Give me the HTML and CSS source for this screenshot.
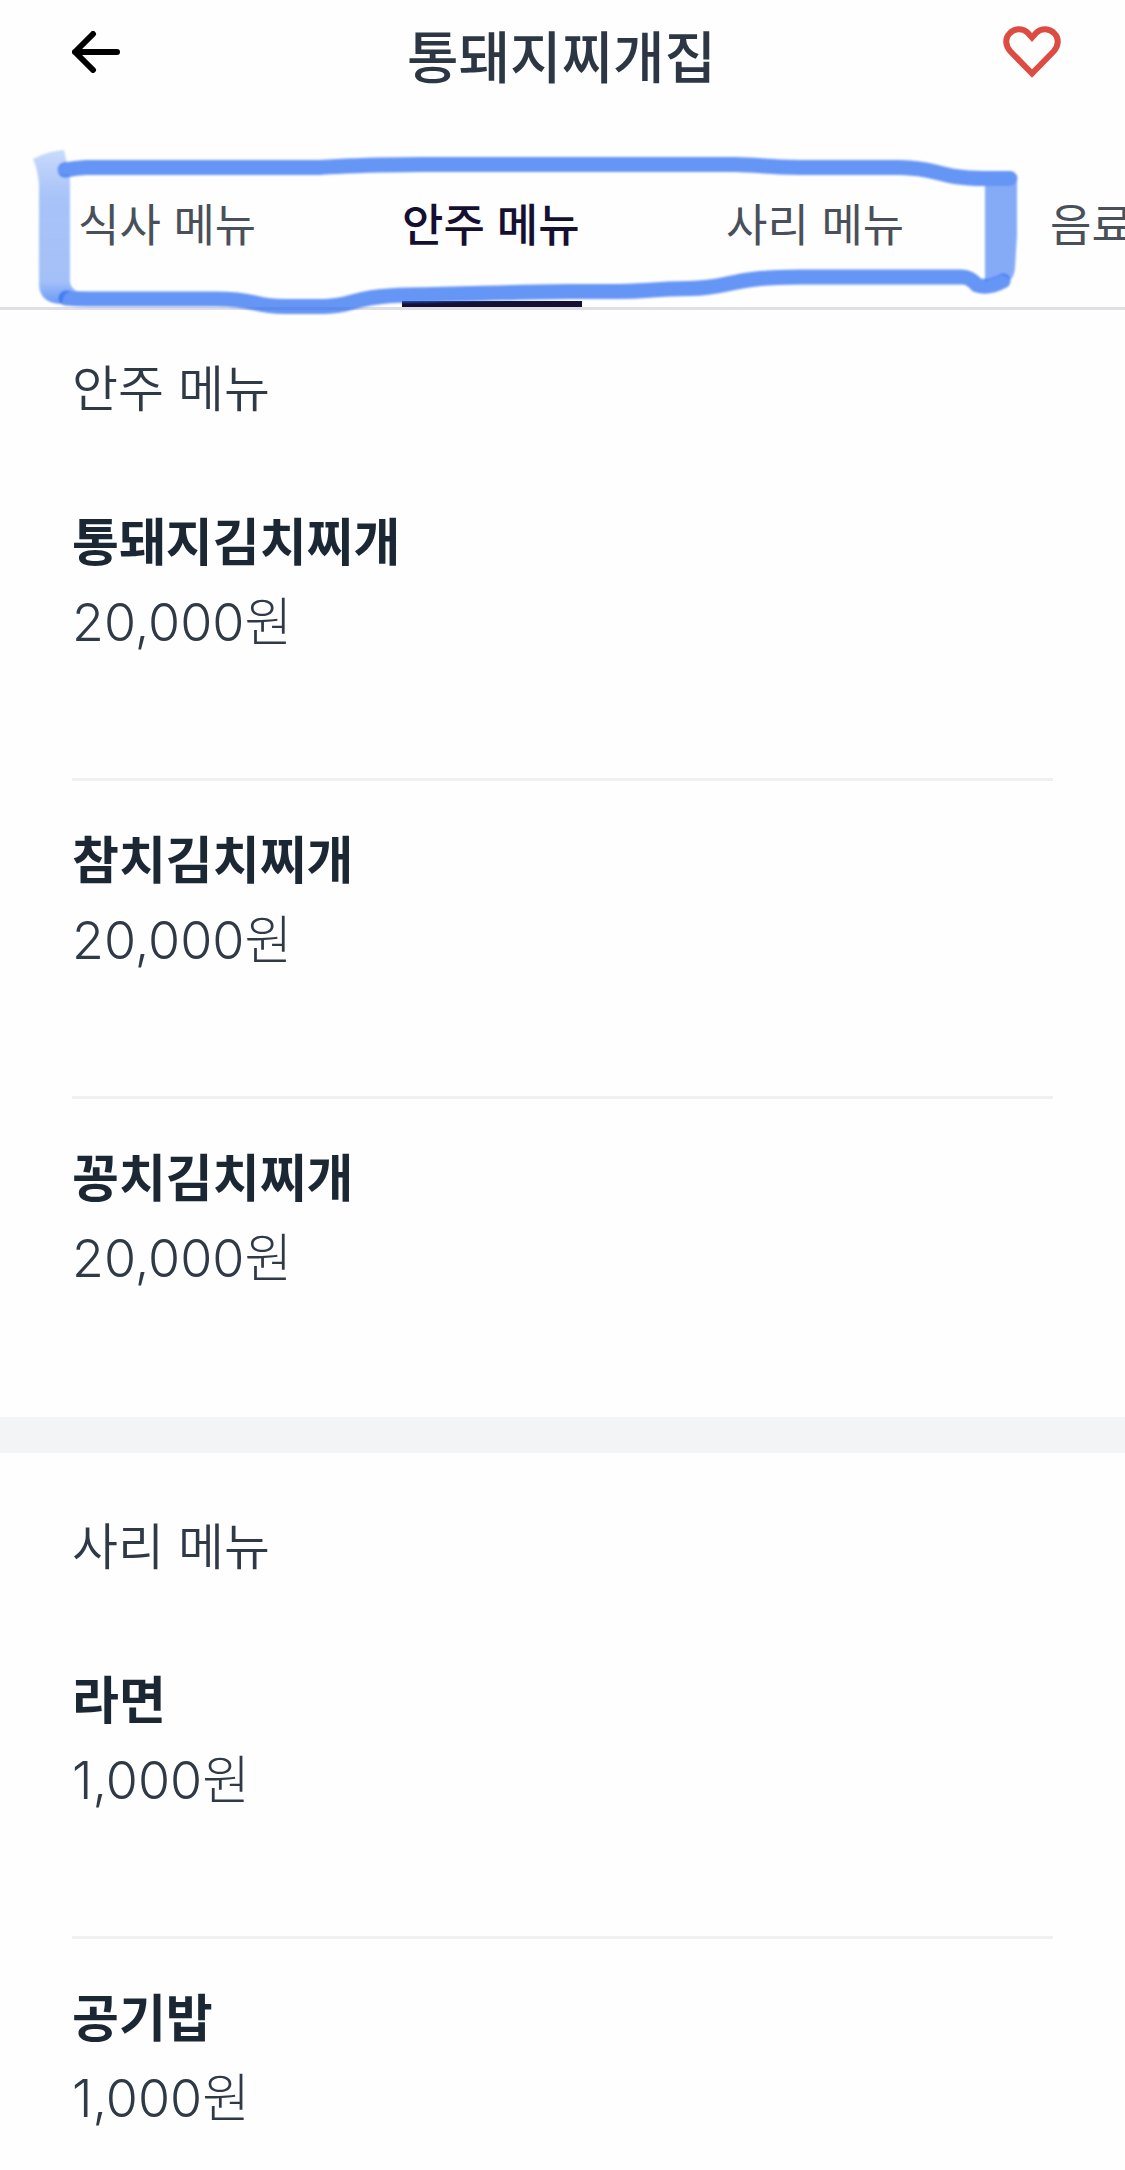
FILE: index.html
```html
<!DOCTYPE html>
<html lang="ko">
<head>
<meta charset="UTF-8" />
<meta name="viewport" content="width=device-width, initial-scale=1.0" />
<title>통돼지찌개집</title>
<link rel="stylesheet" href="styles.css">
</head>
<body>

<!-- 상단 바 -->
<header class="top-bar">
  <button class="icon-btn" type="button" aria-label="뒤로">
    <svg width="48" height="42" viewBox="0 0 48 42" fill="none" stroke="#000" stroke-width="6" stroke-linecap="round" stroke-linejoin="round">
      <path d="M45 21H3M21 3L3 21L21 39"/>
    </svg>
  </button>
  <h1>통돼지찌개집</h1>
  <button class="icon-btn" type="button" aria-label="찜하기">
    <svg width="58" height="52" viewBox="0 0 58 52" fill="none" stroke="#dc4c43" stroke-width="6">
      <path d="M29 47.5L7.5 25.5C2 19.5 2 12 6.5 7.5C11.500 2 19.500 2 24.500 6.500L29 11.500L33.500 6.500C38.500 2 46.500 2 51.500 7.500C56 12 56 19.500 50.500 25.500Z"/>
    </svg>
  </button>
</header>

<!-- 메뉴 탭 -->
<div class="tab-area">
  <nav class="tabs">
    <a href="#meal">식사 메뉴</a>
    <a href="#anju" class="active">안주 메뉴</a>
    <a href="#sari">사리 메뉴</a>
    <a href="#drink">음료</a>
  </nav>
  <!-- 손그림 강조 표시 -->
  <svg class="marker" width="1000" height="180" viewBox="30 145 1000 180" fill="none" stroke="#296cf1" aria-hidden="true">
    <defs>
      <linearGradient id="fade" x1="0" y1="0" x2="0" y2="1">
        <stop offset="0" stop-color="#296cf1" stop-opacity="0.25"/>
        <stop offset="0.3" stop-color="#296cf1" stop-opacity="0.4"/>
        <stop offset="0.85" stop-color="#296cf1" stop-opacity="0.42"/>
        <stop offset="1" stop-color="#296cf1" stop-opacity="0.7"/>
      </linearGradient>
    </defs>
    <path fill="url(#fade)" stroke="none" d="M33 159Q48 151 64 150L67 163Q58 166 57 171Q60 176 70 175V282Q71 289 77 290.500Q62 290 62 304Q39 303 39 284V185Q38 170 33 159Z"/>
    <path class="marker-right" d="M985 186H1009Q1015 186 1017 181V235L1015 268Q1014 277 1010 280Q1004 272 996 277L985 281Z"/>
    <path class="marker-line" d="M65 170Q76 168 86 167.500H320C345 166 350 165 420 164.500H735C760 165 765 167 800 167.500H900C940 168 935 178 985 178.500H1010"/>
    <path class="marker-line" d="M66 298Q76 299 88 299H215C260 299 250 306.500 285 306.500H325C355 306 350 296 410 295C480 294 500 292 570 291.500H620C650 291 650 289 690 288.500C730 288 730 277 800 277H962Q970 277 977 285Q988 289 1003 281"/>
  </svg>
</div>

<main>
  <section id="anju" class="menu-group">
    <h2>안주 메뉴</h2>
    <ul>
      <li>
        <h3>통돼지김치찌개</h3>
        <p>20,000원</p>
      </li>
      <li>
        <h3>참치김치찌개</h3>
        <p>20,000원</p>
      </li>
      <li>
        <h3>꽁치김치찌개</h3>
        <p>20,000원</p>
      </li>
    </ul>
  </section>

  <section id="sari" class="menu-group">
    <h2>사리 메뉴</h2>
    <ul>
      <li>
        <h3>라면</h3>
        <p>1,000원</p>
      </li>
      <li>
        <h3>공기밥</h3>
        <p>1,000원</p>
      </li>
    </ul>
  </section>
</main>

</body>
</html>
```
FILE: styles.css
```css
* {
  box-sizing: border-box;
}
body {
  margin: 0;
  background-color: #fefefe;
  color: #303a46;
  font-family: Inter, "Noto Sans CJK KR", sans-serif;
}
h1, h2, h3, p, ul {
  margin: 0;
  padding: 0;
}
/* 상단 바 */
.top-bar {
  display: flex;
  justify-content: space-between;
  align-items: center;
  height: 104px;
  padding: 0 64px 0 72px;
}
.top-bar h1 {
  font-size: 56px;
  line-height: 80px;
  font-weight: 500;
  color: #2d3744;
  padding-top: 12px;
}
.icon-btn {
  display: flex;
  padding: 0;
  border: none;
  background: none;
  cursor: pointer;
}
/* 탭 */
.tab-area {
  position: relative;
  padding-top: 56px;
  border-bottom: 3px solid #e0dfe7;
}
.tabs {
  display: flex;
  gap: 144px;
  padding-left: 78px;
  overflow: hidden;
}
.tabs a {
  flex: none;
  min-width: 180px;
  height: 147px;
  padding-top: 34px;
  border-bottom: 6px solid transparent;
  color: #495059;
  font-size: 45px;
  line-height: 64px;
  text-decoration: none;
  white-space: nowrap;
}
.tabs a.active {
  border-color: #150f32;
  color: #150f32;
  font-weight: 500;
}
/* 탭 위에 겹치는 표시 */
.marker {
  position: absolute;
  top: 41px;
  left: 30px;
  pointer-events: none;
  filter: blur(1px);
}
.marker-line {
  stroke-width: 15px;
  stroke-linecap: round;
  stroke-linejoin: round;
  opacity: 0.72;
}
.marker-right {
  fill: #296cf1;
  stroke: none;
  opacity: 0.57;
}
/* 메뉴 목록 */
.menu-group {
  padding: 43px 72px 0;
}
.menu-group + .menu-group {
  padding-top: 58px;
  border-top: 36px solid #f3f4f6;
}
.menu-group h2 {
  margin-bottom: 38px;
  font-size: 50px;
  line-height: 72px;
  font-weight: 350;
}
.menu-group ul {
  list-style: none;
}
.menu-group li {
  padding: 44px 0 115px;
  border-bottom: 3px solid #f0f0f1;
}
.menu-group li:last-child {
  border-color: transparent;
}
.menu-group h3 {
  margin-bottom: 4px;
  font-size: 51px;
  line-height: 72px;
  font-weight: 700;
  color: #1b2733;
}
.menu-group p {
  font-size: 52px;
  line-height: 80px;
  font-weight: 300;
}
/* 마지막 그룹은 아래 여백을 줄인다 */
.menu-group:last-child li:last-child {
  padding-bottom: 30px;
  border-bottom: none;
}
```
